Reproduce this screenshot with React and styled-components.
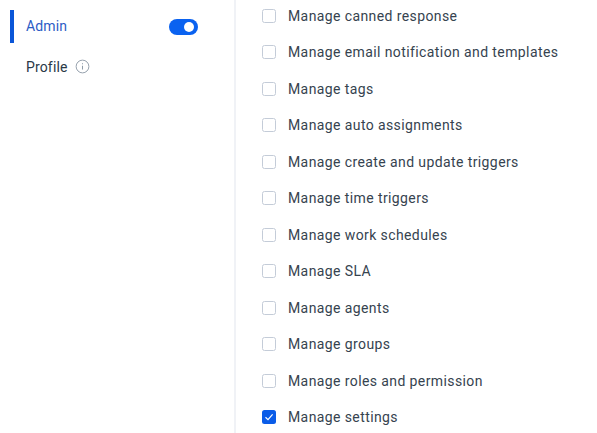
import React from 'react';
import styled, { createGlobalStyle } from 'styled-components';

const GlobalStyle = createGlobalStyle`
  html, body {
    margin: 0;
    padding: 0;
    background: #fff;
    overflow: hidden;
  }
`;

const Page = styled.div`
  display: flex;
  width: 597px;
  height: 433px;
  overflow: hidden;
  font-family: Roboto, 'Liberation Sans', sans-serif;
  font-size: 14px;
  letter-spacing: 0.4px;
`;

const Sidebar = styled.aside`
  width: 236px;
  box-sizing: border-box;
  flex-shrink: 0;
  padding: 10px 0 0 10px;
  border-right: 2px solid #f0f2f6;
  letter-spacing: 0.15px;
`;

const RoleRow = styled.div`
  display: flex;
  align-items: center;
  height: ${(p) => (p.$active ? '33px' : '47px')};
  padding-left: ${(p) => (p.$active ? '12px' : '16px')};
  border-left: ${(p) => (p.$active ? '4px solid #0a56d8' : 'none')};
  color: ${(p) => (p.$active ? '#2c5cc5' : '#2a3947')};
`;

const RoleName = styled.span`
  width: 41px;
  margin-bottom: ${(p) => (p.$active ? '2px' : '0')};
`;

const Toggle = styled.span`
  position: relative;
  width: 29px;
  height: 16px;
  margin-left: 102px;
  border-radius: 8px;
  background: #0a62f0;

  &:after {
    content: '';
    position: absolute;
    top: 3px;
    right: 4px;
    width: 10px;
    height: 10px;
    border-radius: 50%;
    background: #fff;
  }
`;

const InfoIcon = styled.svg`
  width: 15px;
  height: 15px;
  margin-left: 8px;
`;

const List = styled.ul`
  list-style: none;
  margin: -2.5px 0 0;
  padding: 0 0 0 25.5px;
`;

const Item = styled.li`
  display: flex;
  align-items: center;
  height: 36.5px;
  color: #36434f;
`;

const Box = styled.span`
  display: flex;
  align-items: center;
  justify-content: center;
  box-sizing: border-box;
  width: 14px;
  height: 14px;
  margin-right: 12.5px;
  border-radius: 2.5px;
  border: ${(p) => (p.$checked ? 'none' : '1.5px solid #c4ccd8')};
  background: ${(p) => (p.$checked ? '#0a5ce8' : '#fff')};
`;

const permissions = [
  'Manage canned response',
  'Manage email notification and templates',
  'Manage tags',
  'Manage auto assignments',
  'Manage create and update triggers',
  'Manage time triggers',
  'Manage work schedules',
  'Manage SLA',
  'Manage agents',
  'Manage groups',
  'Manage roles and permission',
  'Manage settings',
];

const App = () => (
  <Page>
    <GlobalStyle />
    <Sidebar>
      <RoleRow $active>
        <RoleName $active>Admin</RoleName>
        <Toggle />
      </RoleRow>
      <RoleRow>
        <RoleName>Profile</RoleName>
        <InfoIcon viewBox="0 0 16 16" fill="none">
          <circle cx="8" cy="8" r="6.8" stroke="#8f9ba8" strokeWidth="1" />
          <path d="M8 7.2v4M8 4.6v1" stroke="#8f9ba8" strokeWidth="1.1" />
        </InfoIcon>
      </RoleRow>
    </Sidebar>
    <List>
      {permissions.map((name) => {
        const checked = name === 'Manage settings';
        return (
          <Item key={name}>
            <Box $checked={checked}>
              {checked && (
                <svg width="10" height="10" viewBox="0 0 10 10" fill="none">
                  <path d="M1.5 5.2 4 7.6 8.6 2.4" stroke="#fff" strokeWidth="1.2" />
                </svg>
              )}
            </Box>
            {name}
          </Item>
        );
      })}
    </List>
  </Page>
);

export default App;
